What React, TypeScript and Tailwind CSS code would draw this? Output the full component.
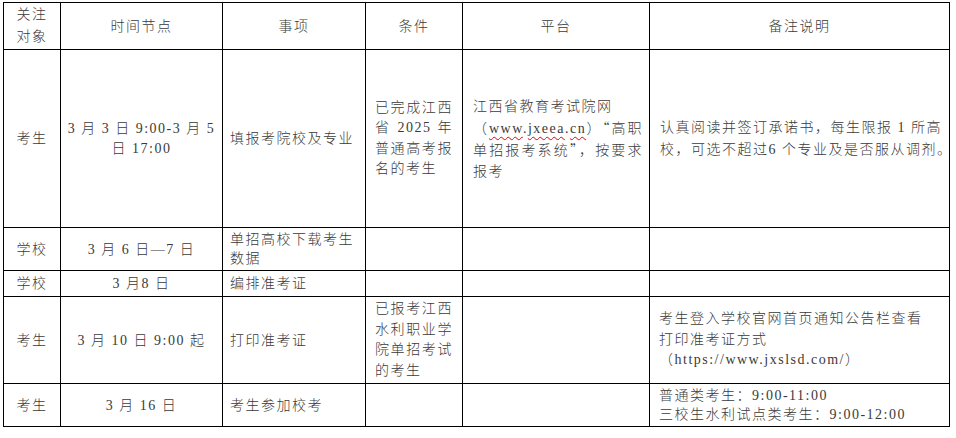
import React from "react";

type CellProps = {
  className?: string;
  children?: React.ReactNode;
};

// every cell draws its own right and bottom rule, the grid draws top and left
function Cell({ className = "", children }: CellProps) {
  return (
    <div className={`flex items-center border-r border-b border-black ${className}`}>
      {children}
    </div>
  );
}

// one line of a justified paragraph, stretched to the column width
function J({ children }: { children: React.ReactNode }) {
  return <div className="whitespace-nowrap text-justify [text-align-last:justify]">{children}</div>;
}

function L({ children }: { children: React.ReactNode }) {
  return <div className="whitespace-nowrap">{children}</div>;
}

function Squiggle({ children }: { children: React.ReactNode }) {
  return (
    <span className="underline decoration-wavy decoration-red-600 decoration-1 underline-offset-[3px]">
      {children}
    </span>
  );
}

export default function App() {
  return (
    <div className="w-[956px] h-[438px] bg-white pl-[3px] pt-[2px] text-[14px] tracking-[1.5px] text-[#3a3a3a] font-light font-['Liberation_Serif','Noto_Sans_CJK_SC',serif]">
      <div className="grid w-fit grid-cols-[57px_162px_143px_97px_187px_300px] grid-rows-[47px_178px_43px_26px_87px_43px] border-l border-t border-black">
        {/* header */}
        <Cell className="justify-center text-center leading-[22px]">
          <div>
            <L>关注</L>
            <L>对象</L>
          </div>
        </Cell>
        <Cell className="justify-center">时间节点</Cell>
        <Cell className="justify-center">事项</Cell>
        <Cell className="justify-center">条件</Cell>
        <Cell className="justify-center">平台</Cell>
        <Cell className="justify-center">备注说明</Cell>

        {/* 考生 - 填报 */}
        <Cell className="justify-center">考生</Cell>
        <Cell className="justify-center text-center leading-[20px]">
          <div>
            <L>3 月 3 日 9:00-3 月 5</L>
            <L>日 17:00</L>
          </div>
        </Cell>
        <Cell className="pl-[7px]">填报考院校及专业</Cell>
        <Cell className="pl-[9px] leading-[20.5px]">
          <div className="w-[78px]">
            <J>已完成江西</J>
            <J>省 2025 年</J>
            <J>普通高考报</J>
            <L>名的考生</L>
          </div>
        </Cell>
        <Cell className="pl-[10px] leading-[21px]">
          <div className="w-[170px]">
            <L>江西省教育考试院网</L>
            <J>
              （<Squiggle>www</Squiggle>.<Squiggle>jxeea</Squiggle>.<Squiggle>cn</Squiggle>）<span className="font-['Noto_Sans_CJK_SC',sans-serif]">“</span>高职
            </J>
            <J>
              单招报考系统<span className="font-['Noto_Sans_CJK_SC',sans-serif]">”</span>，按要求
            </J>
            <L>报考</L>
          </div>
        </Cell>
        <Cell className="pl-[10px] leading-[22px]">
          <div>
            <L>认真阅读并签订承诺书，每生限报 1 所高</L>
            <L>校，可选不超过6 个专业及是否服从调剂。</L>
          </div>
        </Cell>

        {/* 学校 - 下载 */}
        <Cell className="justify-center">学校</Cell>
        <Cell className="justify-center">3 月 6 日—7 日</Cell>
        <Cell className="pl-[7px] leading-[19px]">
          <div>
            <L>单招高校下载考生</L>
            <L>数据</L>
          </div>
        </Cell>
        <Cell />
        <Cell />
        <Cell />

        {/* 学校 - 编排 */}
        <Cell className="justify-center">学校</Cell>
        <Cell className="justify-center">3 月8 日</Cell>
        <Cell className="pl-[7px]">编排准考证</Cell>
        <Cell />
        <Cell />
        <Cell />

        {/* 考生 - 打印 */}
        <Cell className="justify-center">考生</Cell>
        <Cell className="justify-center">3 月 10 日 9:00 起</Cell>
        <Cell className="pl-[7px]">打印准考证</Cell>
        <Cell className="pl-[9px] leading-[20.5px]">
          <div className="w-[78px]">
            <J>已报考江西</J>
            <J>水利职业学</J>
            <J>院单招考试</J>
            <L>的考生</L>
          </div>
        </Cell>
        <Cell />
        <Cell className="pl-[9px] leading-[20.5px]">
          <div>
            <L>考生登入学校官网首页通知公告栏查看</L>
            <L>打印准考证方式</L>
            <L>（https://www.jxslsd.com/）</L>
          </div>
        </Cell>

        {/* 考生 - 校考 */}
        <Cell className="justify-center">考生</Cell>
        <Cell className="justify-center">3 月 16 日</Cell>
        <Cell className="pl-[7px]">考生参加校考</Cell>
        <Cell />
        <Cell />
        <Cell className="pl-[9px] leading-[19px]">
          <div>
            <L>普通类考生：9:00-11:00</L>
            <L>三校生水利试点类考生：9:00-12:00</L>
          </div>
        </Cell>
      </div>
    </div>
  );
}
